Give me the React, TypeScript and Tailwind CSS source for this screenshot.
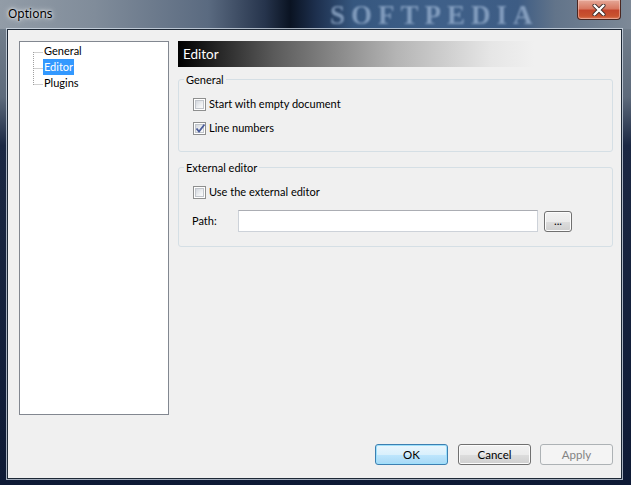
import React from "react";

const font = "font-['Lato',_'Noto_Sans',_sans-serif]";

function CheckBox({ checked }: { checked?: boolean }) {
  return (
    <span className="flex h-[13px] w-[13px] shrink-0 items-center justify-center border border-[#8e8f8f] bg-white">
      <span className="relative flex h-[9px] w-[9px] items-center justify-center border border-[#c1c5cb] bg-[linear-gradient(135deg,#d3d7dd_0%,#eef0f2_60%,#fbfbfb_100%)]">
        {checked && (
          <svg width="11" height="11" viewBox="0 0 11 11" className="absolute -left-[1px] -top-[2px]">
            <path d="M1.5 5.5 L4 8.5 L9.5 1.5" fill="none" stroke="#4a5c9a" strokeWidth="1.8" />
          </svg>
        )}
      </span>
    </span>
  );
}

function WinButton({
  children,
  variant = "normal",
  className = "",
}: {
  children: React.ReactNode;
  variant?: "normal" | "default" | "disabled";
  className?: string;
}) {
  const look =
    variant === "default"
      ? "border-[#3c7fb1] bg-[linear-gradient(to_bottom,#eaf6fd_0%,#d9f0fc_50%,#bee6fd_51%,#a7d9f5_100%)] text-black shadow-[inset_0_0_0_1px_#9ee0fb]"
      : variant === "disabled"
        ? "border-[#adb2b5] bg-[#f4f4f4] text-[#838383]"
        : "border-[#707070] bg-[linear-gradient(to_bottom,#f2f2f2_0%,#ebebeb_50%,#dddddd_51%,#cfcfcf_100%)] text-black shadow-[inset_0_0_0_1px_#fcfcfc]";
  return (
    <div
      className={`flex h-[21px] items-center justify-center rounded-[3px] border text-[11.5px] ${look} ${className}`}
    >
      {children}
    </div>
  );
}

function TreeItem({ label, selected }: { label: string; selected?: boolean }) {
  return (
    <div className="flex h-[16px] items-center">
      <svg width="10" height="16" className="shrink-0">
        <path d="M0.5 9.5 H10" stroke="#a0a0a0" strokeDasharray="1 1" />
      </svg>
      <span
        className={`px-[1px] leading-[16px] ${selected ? "bg-[#3399ff] text-white" : "text-black"}`}
      >
        {label}
      </span>
    </div>
  );
}

export default function App() {
  return (
    <div
      className={`flex h-[485px] w-[631px] flex-col overflow-hidden bg-[linear-gradient(to_bottom,#7a8692_0%,#5d6a7b_20%,#1b2843_30%,#0e1a35_100%)] text-[11px] ${font}`}
    >
      {/* title bar */}
      <div className="flex h-[29px] shrink-0 items-start bg-[linear-gradient(to_right,#929ca7_0%,#808c9a_15%,#5a6a80_33%,#26344c_42%,#0a1322_46%,#1d2f4d_50%,#36577f_56%,#3f6089_70%,#3d5c84_82%,#62748a_88%,#7d8997_100%)]">
        <div className="w-[330px] pl-[8px] pt-[6px] font-['Noto_Sans',sans-serif] text-[12px] leading-[16px] text-black [text-shadow:0_0_6px_#ffffff,0_0_3px_#ffffff]">
          Options
        </div>
        <div className="w-[215px] whitespace-nowrap pt-[1px] font-['Liberation_Serif',serif] text-[27px] font-bold leading-[28px] tracking-[6px] text-[#9fb8d6]/70 blur-[1.2px]">
          SOFTPEDIA
        </div>
        <div className="ml-auto mr-[10px] flex h-[20px] w-[44px] items-center justify-center rounded-b-[4px] border border-t-0 border-[#4a2620] bg-[linear-gradient(to_bottom,#e5a898_0%,#d87962_45%,#c4462c_55%,#c9532f_85%,#dc7a5a_100%)] shadow-[inset_0_0_0_1px_rgba(255,220,210,0.45)]">
          <svg width="14" height="12" viewBox="0 0 14 12">
            <path d="M2.5 1.5 L11.5 10.5 M11.5 1.5 L2.5 10.5" stroke="#3b2a28" strokeWidth="4" strokeLinecap="round" />
            <path d="M2.5 1.5 L11.5 10.5 M11.5 1.5 L2.5 10.5" stroke="#ffffff" strokeWidth="2.4" strokeLinecap="round" />
          </svg>
        </div>
      </div>

      {/* client */}
      <div className="flex flex-1 pb-[6px] pl-[7px] pr-[9px]">
        <div className="relative flex h-[450px] w-[615px] flex-col border border-[#1d2836] bg-[#f0f0f0] pl-[11px] pr-[8px] pt-[11px] shadow-[0_0_0_1px_rgba(215,224,235,0.75)]">
          <div className="flex">
            {/* tree */}
            <div className="h-[374px] w-[150px] shrink-0 border border-[#828790] bg-white pl-[13px] pt-[1px]">
              <div className="relative">
                <svg width="2" height="40" className="absolute left-[0px] top-[9px]">
                  <path d="M0.5 0 V33" stroke="#a0a0a0" strokeDasharray="1 1" />
                </svg>
                <TreeItem label="General" />
                <TreeItem label="Editor" selected />
                <TreeItem label="Plugins" />
              </div>
            </div>

            {/* right panel */}
            <div className="ml-[9px] flex flex-1 flex-col">
              <div className="flex h-[26px] items-center bg-[linear-gradient(to_right,#000000_0%,#5a5a5a_22%,#b4b4b4_50%,#e6e6e6_72%,#f0f0f0_82%)] pl-[5px] text-[13.5px] text-white">
                Editor
              </div>

              <fieldset className="mt-[5px] rounded-[3px] border border-[#d5dfe5] pb-[15px]">
                <legend className="ml-[5px] px-[2px] leading-[15px] text-black">General</legend>
                <div className="mt-[9px] flex flex-col gap-[8px] pl-[14px]">
                  <div className="flex h-[16px] items-center gap-[3px]">
                    <CheckBox />
                    <span>Start with empty document</span>
                  </div>
                  <div className="flex h-[16px] items-center gap-[3px]">
                    <CheckBox checked />
                    <span>Line numbers</span>
                  </div>
                </div>
              </fieldset>

              <fieldset className="mt-[8px] rounded-[3px] border border-[#d5dfe5] pb-[14px]">
                <legend className="ml-[5px] px-[2px] leading-[15px] text-black">External editor</legend>
                <div className="pl-[14px]">
                  <div className="mt-[9px] flex h-[16px] items-center gap-[3px]">
                    <CheckBox />
                    <span>Use the external editor</span>
                  </div>
                  <div className="mt-[10px] flex h-[22px] items-center">
                    <span className="-ml-[1px] w-[46px] shrink-0">Path:</span>
                    <div className="h-[22px] w-[300px] border border-[#cdd2d9] border-t-[#abadb3] bg-white" />
                    <WinButton className="ml-[6px] w-[28px] text-[10px] leading-none">...</WinButton>
                  </div>
                </div>
              </fieldset>
            </div>
          </div>

          {/* buttons */}
          <div className="mt-[29px] flex justify-end">
            <WinButton variant="default" className="w-[73px]">OK</WinButton>
            <WinButton className="ml-[10px] w-[73px]">Cancel</WinButton>
            <WinButton variant="disabled" className="ml-[9px] w-[73px]">Apply</WinButton>
          </div>
        </div>
      </div>
    </div>
  );
}
